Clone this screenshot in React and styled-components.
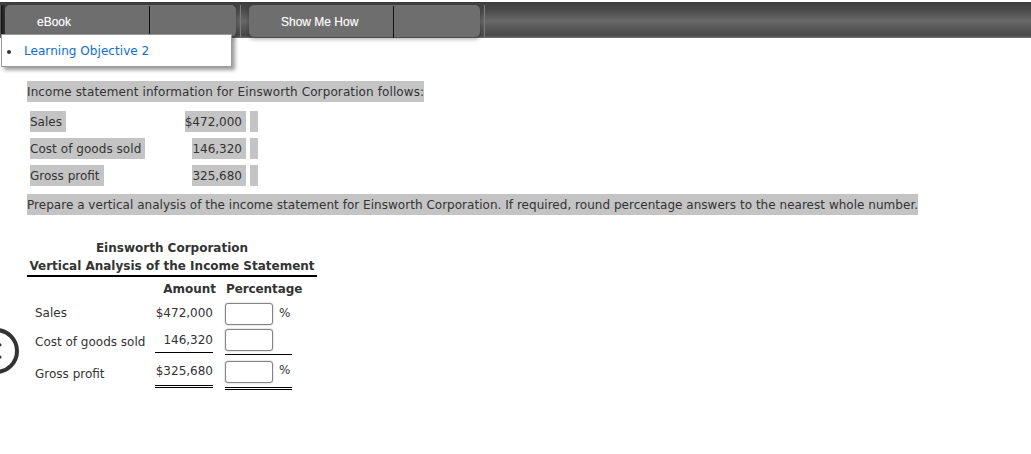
import React from "react";
import styled, { createGlobalStyle } from "styled-components";

const GlobalStyle = createGlobalStyle`
  html, body { margin: 0; padding: 0; background: #fff; }
  body {
    width: 1031px;
    height: 454px;
    overflow: hidden;
    position: relative;
    font-family: "DejaVu Sans", Verdana, sans-serif;
    font-size: 12px;
    color: #333;
  }
`;

const Toolbar = styled.div`
  margin-top: 2px;
  height: 36px;
  display: flex;
  padding-top: 3px;
  box-sizing: border-box;
  background: linear-gradient(#3c3c3c 0%, #4a4a4a 22%, #686868 52%, #4c4c4c 88%, #4a4a4a 94%, #747474 100%);
`;

const ToolbarEdge = styled.div`
  width: 5px;
  height: 32px;
  background: linear-gradient(90deg, #555 0, #555 1px, #151515 1px, #3a3a3a 100%);
`;

const TabGroup = styled.div`
  width: 231px;
  height: 32px;
  display: grid;
  grid-template-columns: 145px 1fr;
  background: #6e6e6e;
  border-radius: 5px;
  box-shadow: 0 2px 4px rgba(0, 0, 0, 0.35);
  font-family: "Liberation Sans", Arial, sans-serif;
  font-size: 12px;
  color: #fff;
`;

const Tab = styled.div`
  border-right: ${(p) => (p.$divider ? "1px solid #111" : "none")};
  margin-top: 1px;
  height: 32px;
  line-height: 33px;
  padding-left: ${(p) => p.$pad || 0}px;
  box-sizing: border-box;
  text-shadow: 0 0 1px rgba(255, 255, 255, 0.4);
`;

const Separator = styled.div`
  width: 1px;
  height: 32px;
  background: #7c7c7c;
  margin: 0 ${(p) => p.$after}px 0 ${(p) => p.$before}px;
`;

const Popup = styled.div`
  position: absolute;
  top: 34px;
  left: 1px;
  width: 231px;
  height: 33px;
  box-sizing: border-box;
  background: #fff;
  border: 1px solid #9a9a9a;
  box-shadow: 3px 3px 4px rgba(0, 0, 0, 0.4);
  display: flex;
  align-items: center;
  padding-left: 5px;
  gap: 13px;
`;

const Bullet = styled.span`
  width: 4px;
  height: 4px;
  margin-top: 2px;
  border-radius: 50%;
  background: #333;
`;

const PopupLink = styled.a`
  color: #0d6fcb;
  font-size: 12px;
  letter-spacing: 0.05px;
  text-decoration: none;
`;

const Content = styled.div`
  padding: 43px 0 0 27px;
`;

const Highlighted = styled.span`
  display: block;
  width: fit-content;
  height: 21px;
  line-height: 23px;
  white-space: nowrap;
  background: #c4c4c4;
  letter-spacing: ${(p) => p.$spacing || 0}px;
  padding-right: ${(p) => p.$right || 0}px;
`;

const InfoTable = styled.div`
  display: grid;
  grid-template-columns: 150px 62px 8px;
  grid-auto-rows: 21px;
  column-gap: 4px;
  row-gap: 6px;
  margin: 9px 0 8px 3px;
`;

const InfoAmount = styled(Highlighted)`
  justify-self: end;
`;

const Swatch = styled.div`
  background: #c4c4c4;
`;

const ReportHead = styled.div`
  margin-top: 23px;
  padding-top: 1px;
  width: 290px;
  text-align: center;
  font-weight: bold;
  line-height: 18px;
  border-bottom: 2px solid #000;
`;

const ReportColumns = styled.div`
  margin-left: 3px;
  display: grid;
  grid-template-columns: 186px auto;
  column-gap: 10px;
  justify-content: start;
  height: 24px;
  line-height: 25px;
  font-weight: bold;
`;

const AmountHead = styled.div`
  text-align: right;
`;

const PercentageHead = styled.div`
  letter-spacing: -0.1px;
`;

const ReportRow = styled.div`
  margin: 0 0 ${(p) => p.$after || 0}px 3px;
  display: grid;
  grid-template-columns: 125px 58px 79px;
`;

const Label = styled.div`
  padding-left: 5px;
  line-height: ${(p) => p.$lh}px;
`;

const Amount = styled.div`
  text-align: right;
  align-self: start;
  height: ${(p) => p.$h}px;
  line-height: ${(p) => p.$lh}px;
  border-bottom: ${(p) => p.$rule || "none"};
`;

const FieldCell = styled.div`
  margin-left: 12px;
  height: ${(p) => p.$h}px;
  padding-top: ${(p) => p.$top}px;
  box-sizing: border-box;
  display: flex;
  align-items: flex-start;
  border-bottom: ${(p) => p.$rule || "none"};
`;

const Field = styled.input`
  width: 48px;
  height: 22px;
  flex: none;
  box-sizing: border-box;
  padding: 0;
  background: #fff;
  border: 1px solid #848484;
  border-radius: 3px;
  box-shadow: 0 0 2px rgba(0, 0, 0, 0.3);
`;

const Percent = styled.div`
  padding-left: 6px;
  line-height: ${(p) => p.$lh}px;
`;

const CircleNav = styled.div`
  position: absolute;
  left: -27px;
  top: 328px;
  width: 38px;
  height: 38px;
  border: 4px solid #333;
  border-radius: 50%;
`;

const NavChevron = styled.svg`
  position: absolute;
  left: 13px;
  top: 11px;
  width: 12px;
  height: 16px;
`;

export default function App() {
  return (
    <>
      <GlobalStyle />
      <Toolbar>
        <ToolbarEdge />
        <TabGroup>
          <Tab $divider $pad={32}>eBook</Tab>
          <Tab />
        </TabGroup>
        <Separator $before={4} $after={8} />
        <TabGroup>
          <Tab $divider $pad={32}>Show Me How</Tab>
          <Tab />
        </TabGroup>
        <Separator $before={4} $after={0} />
      </Toolbar>
      <Popup>
        <Bullet />
        <PopupLink href="#">Learning Objective 2</PopupLink>
      </Popup>
      <Content>
        <Highlighted $spacing={0.11}>Income statement information for Einsworth Corporation follows:</Highlighted>
        <InfoTable>
          <div><Highlighted $right={4}>Sales</Highlighted></div>
          <InfoAmount $right={4}>$472,000</InfoAmount>
          <Swatch />
          <div><Highlighted $right={4} $spacing={0.05}>Cost of goods sold</Highlighted></div>
          <InfoAmount $right={4}>146,320</InfoAmount>
          <Swatch />
          <div><Highlighted $right={4}>Gross profit</Highlighted></div>
          <InfoAmount $right={4}>325,680</InfoAmount>
          <Swatch />
        </InfoTable>
        <Highlighted $spacing={0.027}>
          Prepare a vertical analysis of the income statement for Einsworth Corporation. If required, round percentage answers to the nearest whole number.
        </Highlighted>
        <ReportHead>
          Einsworth Corporation
          <br />
          Vertical Analysis of the Income Statement
        </ReportHead>
        <ReportColumns>
          <AmountHead>Amount</AmountHead>
          <PercentageHead>Percentage</PercentageHead>
        </ReportColumns>
        <ReportRow>
          <Label $lh={24}>Sales</Label>
          <Amount $h={27} $lh={24}>$472,000</Amount>
          <FieldCell $h={27} $top={2}>
            <Field />
            <Percent $lh={20}>%</Percent>
          </FieldCell>
        </ReportRow>
        <ReportRow $after={3}>
          <Label $lh={28}>Cost of goods sold</Label>
          <Amount $h={24} $lh={24} $rule="1px solid #000">146,320</Amount>
          <FieldCell $h={27} $top={1} $rule="1px solid #000">
            <Field />
          </FieldCell>
        </ReportRow>
        <ReportRow>
          <Label $lh={30}>Gross profit</Label>
          <Amount $h={26} $lh={24} $rule="3px double #000">$325,680</Amount>
          <FieldCell $h={31} $top={2} $rule="3px double #000">
            <Field />
            <Percent $lh={19}>%</Percent>
          </FieldCell>
        </ReportRow>
      </Content>
      <CircleNav>
        <NavChevron viewBox="0 0 12 16">
          <path d="M11 1 L4 8 L11 15" fill="none" stroke="#333" strokeWidth="2.5" />
        </NavChevron>
      </CircleNav>
    </>
  );
}
